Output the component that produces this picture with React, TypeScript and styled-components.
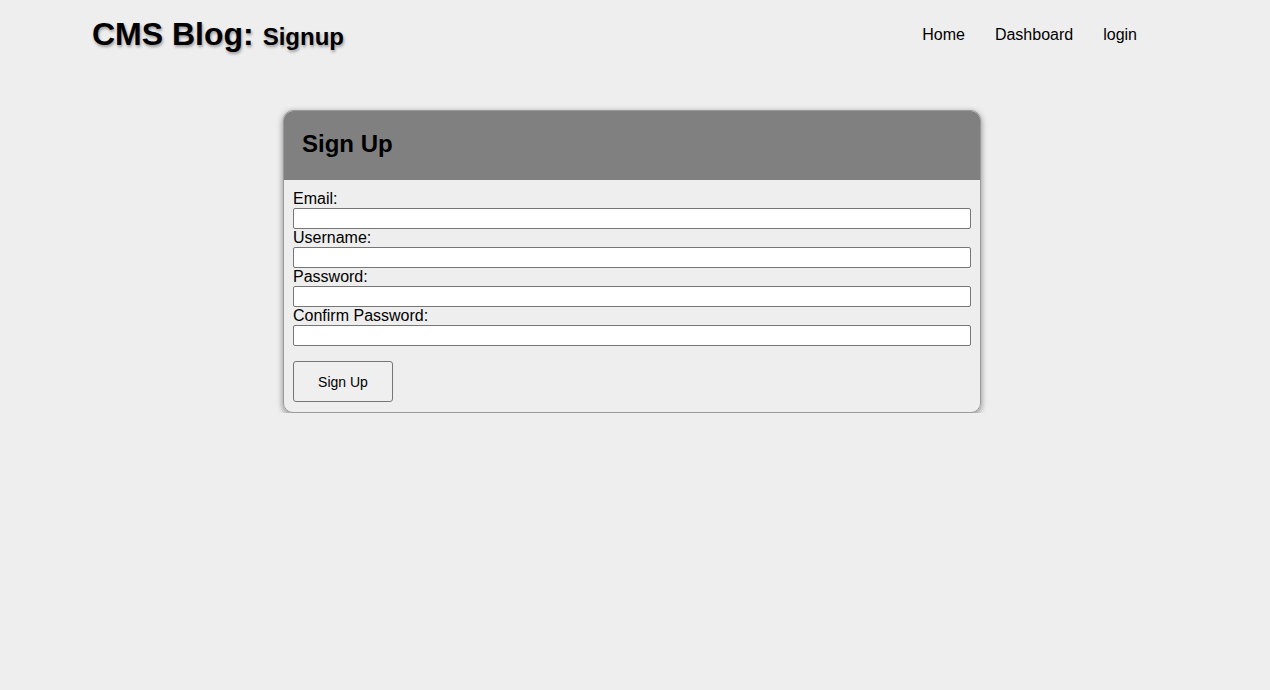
import React from 'react';
import styled, { createGlobalStyle } from 'styled-components';

const GlobalStyle = createGlobalStyle`
  body {
    margin: 0;
    background: #eeeeee;
    font-family: Arial, "Liberation Sans", sans-serif;
    color: #000;
  }
`;

const fields = [
  { id: 'email', label: 'Email:', type: 'email' },
  { id: 'username', label: 'Username:', type: 'text' },
  { id: 'password', label: 'Password:', type: 'password' },
  { id: 'confirm', label: 'Confirm Password:', type: 'password' },
];

const App = () => {
  return (
    <>
      <GlobalStyle />
      <Header>
        <Title>
          CMS Blog: <SubTitle>Signup</SubTitle>
        </Title>
        <Nav>
          <NavLink href="#">Home</NavLink>
          <NavLink href="#">Dashboard</NavLink>
          <NavLink href="#">login</NavLink>
        </Nav>
      </Header>
      <Main>
        <Card>
          <CardHeader>
            <CardTitle>Sign Up</CardTitle>
          </CardHeader>
          <Form onSubmit={(e) => e.preventDefault()}>
            {fields.map((f) => (
              <Field key={f.id}>
                <Label htmlFor={f.id}>{f.label}</Label>
                <Input id={f.id} type={f.type} />
              </Field>
            ))}
            <Button type="submit">Sign Up</Button>
          </Form>
        </Card>
      </Main>
    </>
  );
};

export default App;

const Header = styled.header`
  display: flex;
  align-items: center;
  justify-content: space-between;
  height: 68px;
  padding: 0 119px 0 92px;
`;

const Title = styled.h1`
  margin: 0;
  font-size: 32px;
  font-weight: bold;
  text-shadow: 1px 2px 3px #9a9a9a;
`;

const SubTitle = styled.span`
  font-size: 24px;
`;

const Nav = styled.nav`
  display: flex;
  gap: 30px;
  padding: 2px 14px 0 0;
`;

const NavLink = styled.a`
  font-size: 16px;
  color: #000;
  text-decoration: none;
`;

const Main = styled.main`
  display: flex;
  justify-content: center;
  padding: 42px 6px 0 0;
`;

const Card = styled.section`
  width: 698px;
  box-sizing: border-box;
  border: 1px solid #9a9a9a;
  border-radius: 10px;
  overflow: hidden;
  box-shadow: 0 2px 6px rgba(0, 0, 0, 0.45);
`;

const CardHeader = styled.div`
  display: flex;
  align-items: center;
  height: 69px;
  padding: 0 18px 3px;
  box-sizing: border-box;
  background: #808080;
`;

const CardTitle = styled.h2`
  margin: 0;
  font-size: 24px;
  font-weight: bold;
`;

const Form = styled.form`
  display: flex;
  flex-direction: column;
  align-items: flex-start;
  padding: 10px 9px 10px;
`;

const Field = styled.div`
  display: flex;
  flex-direction: column;
  align-self: stretch;
`;

const Label = styled.label`
  font-size: 16px;
  line-height: 18px;
`;

const Input = styled.input`
  box-sizing: border-box;
  height: 21px;
  margin: 0;
  border: 1px solid #767676;
  border-radius: 2px;
  background: #fff;
`;

const Button = styled.button`
  margin-top: 15px;
  width: 100px;
  height: 41px;
  border: 1px solid #767676;
  border-radius: 3px;
  background: #efefef;
  font-family: Arial, "Liberation Sans", sans-serif;
  font-size: 14px;
  color: #000;
`;
